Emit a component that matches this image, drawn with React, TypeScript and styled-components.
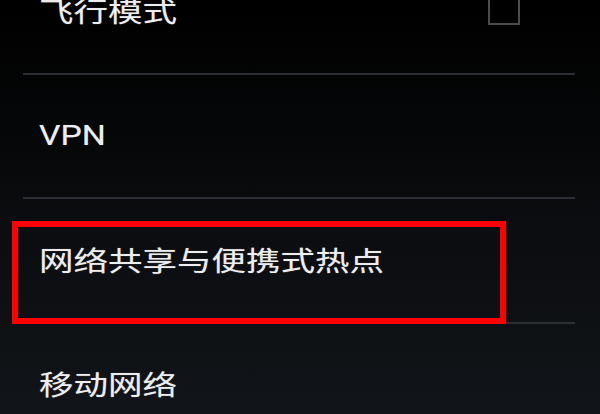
import React from "react";
import styled, { createGlobalStyle } from "styled-components";

const Global = createGlobalStyle`
  html, body {
    margin: 0;
    padding: 0;
    width: 600px;
    height: 414px;
    overflow: hidden;
    background: #000;
  }
  #root { width: 600px; height: 414px; }
`;

const Screen = styled.div`
  width: 600px;
  height: 414px;
  overflow: hidden;
  background: linear-gradient(180deg, #000000 0%, #050607 30%, #0b0d10 55%, #111418 100%);
  font-family: Roboto, "Noto Sans CJK SC", "Noto Sans", sans-serif;
`;

const List = styled.div`
  margin: -50px 25px 0 23px;
  display: flex;
  flex-direction: column;
`;

const Row = styled.div`
  position: relative;
  height: 122.6px;
  border-bottom: 2px solid #2b2e32;
  display: flex;
  align-items: center;
  justify-content: space-between;
  padding: 0 55px 0 16px;
`;

const Label = styled.span<{ $cjk?: boolean }>`
  display: inline-block;
  color: #ededed;
  font-size: ${(p) => (p.$cjk ? "27.6px" : "27px")};
  font-weight: 400;
  line-height: 1;
  margin-top: 2px;
  transform: scaleX(1.25);
  transform-origin: left center;
  white-space: nowrap;
  text-shadow: 0 0 1px rgba(255, 255, 255, 0.4);
`;

const Checkbox = styled.span`
  width: 28px;
  height: 28px;
  border: 2px solid #4b4c4e;
  margin-top: -4px;
`;

const Highlight = styled.div`
  position: absolute;
  left: -11px;
  top: 22px;
  width: 482px;
  height: 91px;
  border: 6px solid #ff0000;
  pointer-events: none;
`;

type Item = { label: string; cjk?: boolean; checkbox?: boolean; highlighted?: boolean };

const items: Item[] = [
  { label: "飞行模式", cjk: true, checkbox: true },
  { label: "VPN" },
  { label: "网络共享与便携式热点", cjk: true, highlighted: true },
  { label: "移动网络", cjk: true },
];

export default function App() {
  return (
    <>
      <Global />
      <Screen>
        <List>
          {items.map((it) => (
            <Row key={it.label}>
              <Label $cjk={it.cjk}>{it.label}</Label>
              {it.checkbox && <Checkbox />}
              {it.highlighted && <Highlight />}
            </Row>
          ))}
        </List>
      </Screen>
    </>
  );
}
